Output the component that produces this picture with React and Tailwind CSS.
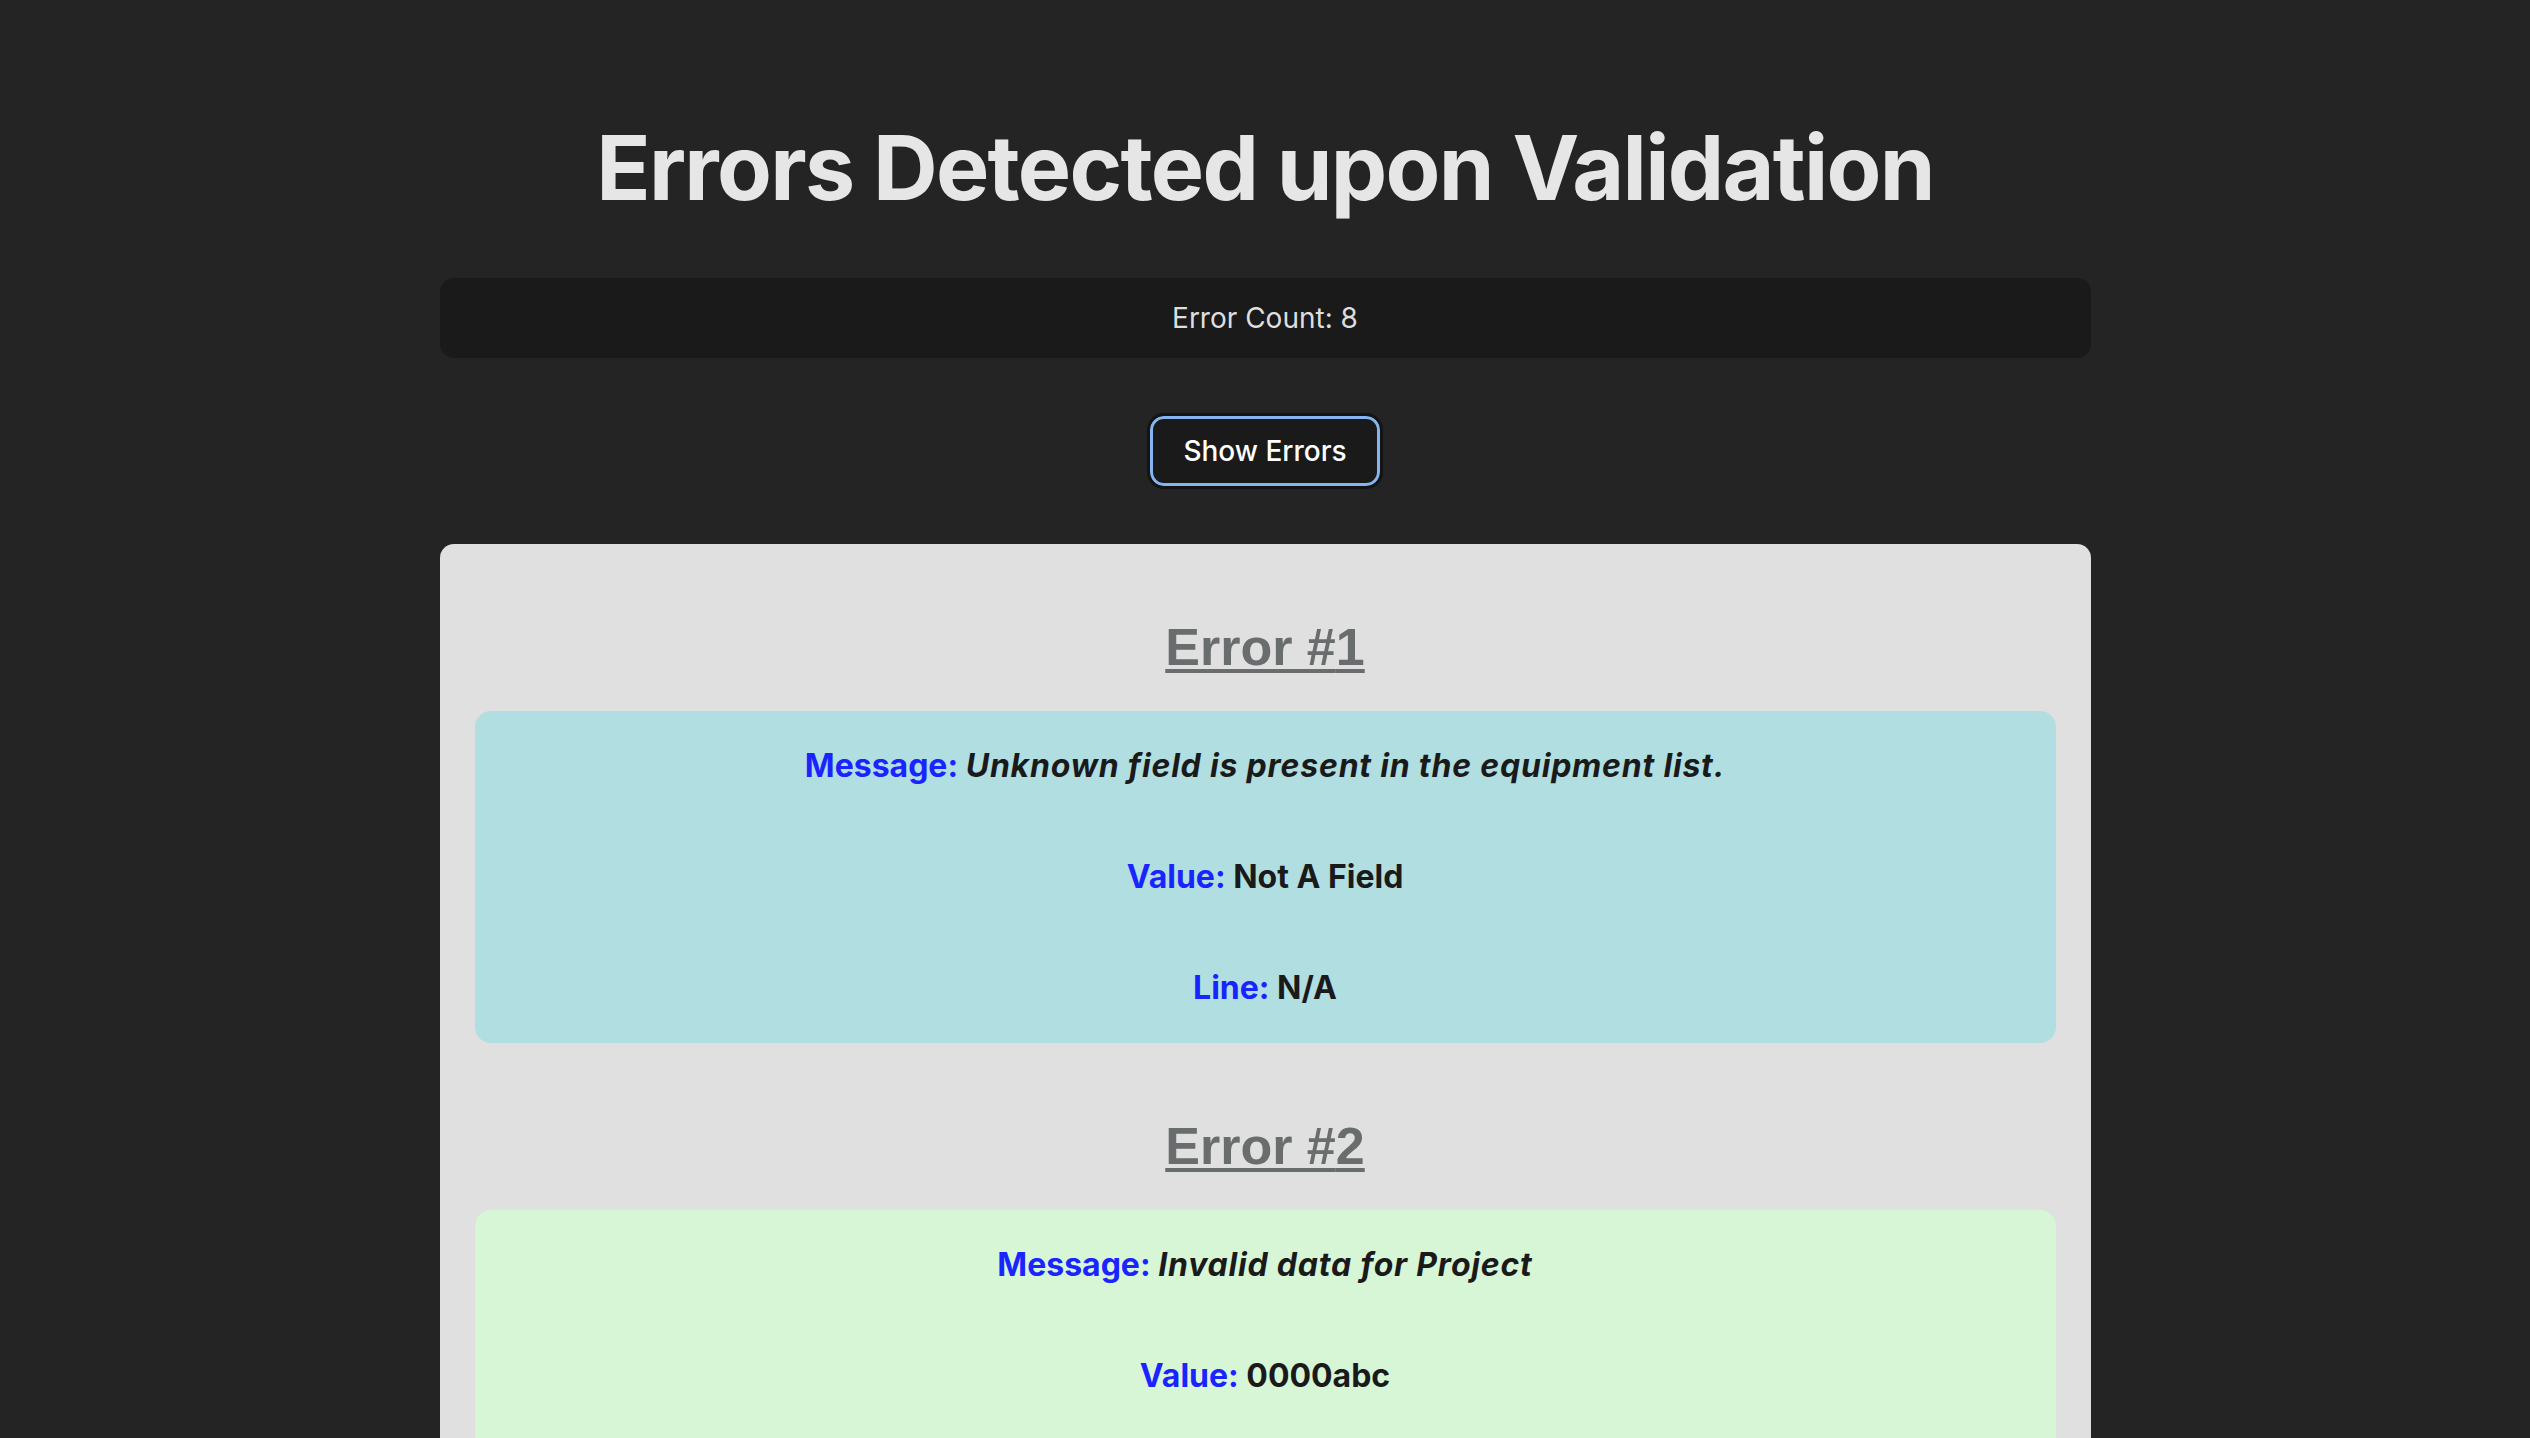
import React, { useState } from 'react';

const errors = [
  { message: 'Unknown field is present in the equipment list.', value: 'Not A Field', line: 'N/A' },
  { message: 'Invalid data for Project', value: '0000abc', line: '4' },
  { message: 'Invalid data for Start Date', value: '13/45/2023', line: '7' },
  { message: 'Missing required field: Owner', value: 'N/A', line: '9' },
  { message: 'Invalid data for Quantity', value: '-3', line: '12' },
  { message: 'Duplicate equipment ID', value: 'EQ-0042', line: '15' },
  { message: 'Invalid data for Cost', value: '12,00.5', line: '18' },
  { message: 'Unknown field is present in the equipment list.', value: 'Colour', line: 'N/A' },
];

// alternating card colours
const cardBg = ['bg-[#b1dee0]', 'bg-[#d6f6d6]'];

const ErrorCard = ({ error, index }) => (
  <div className="pt-[64px]">
    <h2 className="text-[52px] leading-[1.5] font-bold text-[#6a6d6d] underline underline-offset-[4px] decoration-[4px] mb-[25px] font-['Liberation_Sans',Arial,sans-serif]">
      Error #{index + 1}
    </h2>
    <div className={`${cardBg[index % 2]} rounded-[16px] pt-[31px] pb-[31px] flex flex-col gap-[63px] text-[32px] leading-[1.5] font-bold text-[#1a1a1a]`}>
      <p>
        <span className="text-[#1a24ff]">Message:</span> <em className="tracking-[0.025em]">{error.message}</em>
      </p>
      <p>
        <span className="text-[#1a24ff]">Value:</span> {error.value}
      </p>
      <p>
        <span className="text-[#1a24ff]">Line:</span> {error.line}
      </p>
    </div>
  </div>
);

const App = () => {
  const [showErrors, setShowErrors] = useState(true);

  return (
    <div className="min-h-screen bg-[#242424] text-[#dedede] font-['Inter',sans-serif] text-[28px] leading-[1.5] text-center pt-[59px]">
      <h1 className="text-[89.6px] leading-[1.1] font-bold tracking-[-0.019em] text-[#e6e6e6] my-[60px]">
        Errors Detected upon Validation
      </h1>

      <div className="w-[1651px] mx-auto bg-[#1a1a1a] rounded-[14px] py-[19px]">
        Error Count: {errors.length}
      </div>

      <div className="mt-[58px]">
        <button
          onClick={() => setShowErrors(!showErrors)}
          className="h-[70px] px-[30px] rounded-[14px] bg-[#1a1a1a] text-white font-medium text-[28px] border-[3px] border-[#85b5f0] outline-[3px] outline-[#141414]"
        >
          Show Errors
        </button>
      </div>

      {showErrors && (
        <div className="w-[1651px] mx-auto mt-[58px] bg-[#dfe0df] rounded-[14px] px-[35px] pb-[35px]">
          {errors.map((err, i) => (
            <ErrorCard key={i} error={err} index={i} />
          ))}
        </div>
      )}
    </div>
  );
};

export default App;
